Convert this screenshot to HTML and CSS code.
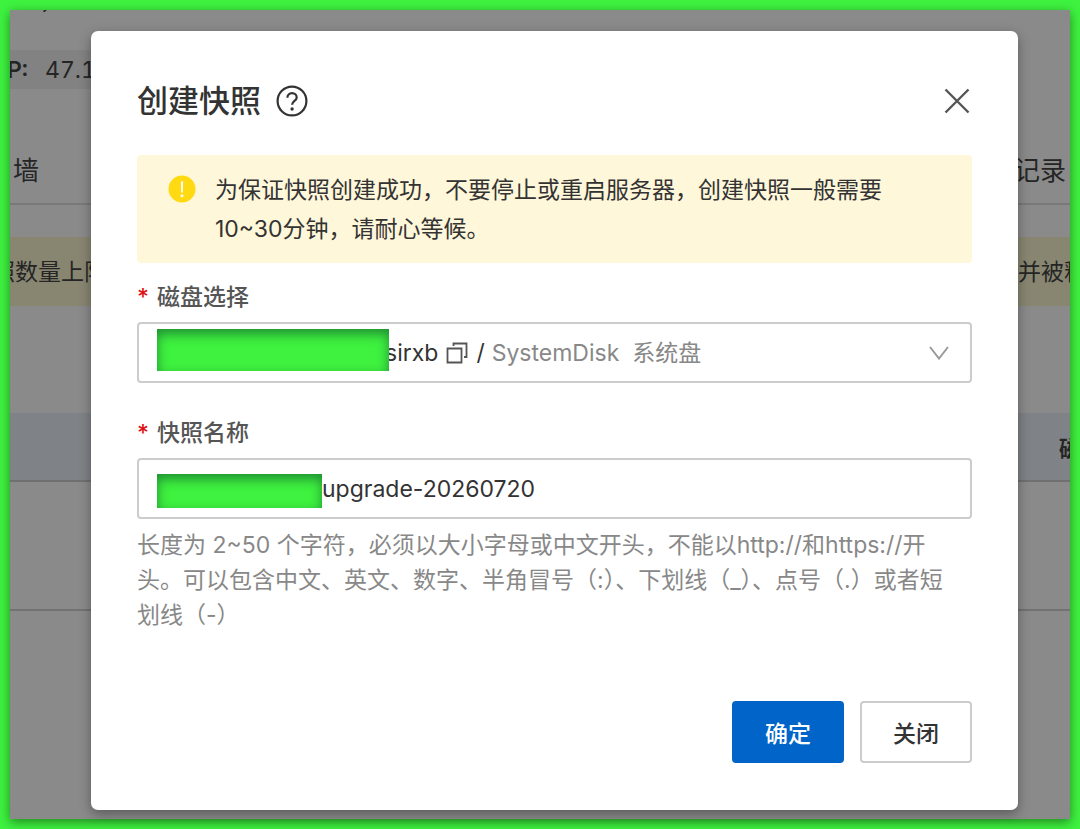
FILE: index.html
```html
<!DOCTYPE html>
<html lang="zh-CN">
<head>
<meta charset="utf-8">
<meta name="viewport" content="width=device-width, initial-scale=1">
<title>创建快照</title>
<link rel="stylesheet" href="styles.css">
</head>
<body>
<div class="frame">
  <div class="page" aria-hidden="true">
    <div class="page-top">，</div>
    <div class="page-info"><strong>P:</strong><span>47.1</span></div>
    <div class="page-tabs"><span>墙</span><span>记录</span></div>
    <div class="page-notice"><span>照数量上限</span><span>并被释</span></div>
    <div class="page-thead"><span>磁</span></div>
    <div class="page-row"></div>
  </div>

  <div class="overlay">
    <form class="dialog" role="dialog" aria-labelledby="dialog-title">
      <header class="dialog-header">
        <h1 class="dialog-title" id="dialog-title">创建快照</h1>
        <button class="icon-button" type="button" aria-label="帮助">
          <svg width="32" height="32" viewBox="0 0 32 32" fill="none" stroke="#333" stroke-width="2.2">
            <circle cx="16" cy="16" r="14.4"/>
            <path d="M11.4 12.8c0-2.7 1.9-4.6 4.6-4.6s4.7 1.8 4.7 4.3c0 3.3-4.6 3.5-4.6 7.2"/>
            <circle cx="16.1" cy="24" r="1.7" fill="#333" stroke="none"/>
          </svg>
        </button>
        <button class="icon-button icon-button-close" type="button" aria-label="关闭对话框">
          <svg width="30" height="30" viewBox="0 0 30 30" fill="none" stroke="#555" stroke-width="2.4">
            <path d="M3.5 3.5l23 23M26.5 3.5l-23 23"/>
          </svg>
        </button>
      </header>

      <div class="alert" role="alert">
        <svg class="alert-icon" width="28" height="28" viewBox="0 0 28 28">
          <circle cx="14" cy="14" r="13.5" fill="#ffd911"/>
          <path d="M12.9 6.5h2.2l-.3 11h-1.6z" fill="#fff"/>
          <circle cx="14" cy="20.8" r="1.5" fill="#fff"/>
        </svg>
        <p class="alert-text">为保证快照创建成功，不要停止或重启服务器，创建快照一般需要10~30分钟，请耐心等候。</p>
      </div>

      <div class="field">
        <label class="label" for="disk"><span class="required">*</span>磁盘选择</label>
        <div class="control">
          <span class="mask mask-disk"></span>
          <span class="disk-id">sirxb</span>
          <button class="icon-button copy" type="button" aria-label="复制">
            <svg width="22" height="22" viewBox="0 0 22 22" fill="none" stroke="#555" stroke-width="1.8">
              <path d="M1.5 6.5h14v14h-14z"/>
              <path d="M7.5 4V1.5h13V15H18"/>
            </svg>
          </button>
          <span class="slash">/</span>
          <select class="select" id="disk">
            <option>SystemDisk&nbsp; 系统盘</option>
          </select>
          <svg class="chevron" width="20" height="14" viewBox="0 0 20 14" fill="none" stroke="#999" stroke-width="2">
            <path d="M1 1l9 11.5L19 1"/>
          </svg>
        </div>
      </div>

      <div class="field">
        <label class="label" for="name"><span class="required">*</span>快照名称</label>
        <div class="control">
          <span class="mask mask-name"></span>
          <input class="input" id="name" type="text" value="upgrade-20260720" aria-describedby="name-help">
        </div>
        <p class="help" id="name-help">长度为 2~50 个字符，必须以大小字母或中文开头，不能以http://和https://开头。可以包含中文、英文、数字、半角冒号（:）、下划线（_）、点号（.）或者短划线（-）</p>
      </div>

      <footer class="actions">
        <button class="button button-primary" type="submit">确定</button>
        <button class="button" type="button">关闭</button>
      </footer>
    </form>
  </div>
</div>
</body>
</html>
```
FILE: styles.css
```css
* {
  box-sizing: border-box;
}

body {
  margin: 0;
  min-height: 100vh;
  padding: 10px;
  display: flex;
  background: #3ef23f;
  color: #333;
  font-family: Inter, "Noto Sans CJK SC", sans-serif;
  font-size: 23px;
}

h1,
p {
  margin: 0;
}

button,
input,
select {
  font: inherit;
  color: inherit;
}

.frame {
  position: relative;
  flex: 1;
  display: flex;
  background: #8a8a8a;
  box-shadow: 0 3px 10px rgba(0, 0, 0, 0.45);
}

/* Dimmed page behind the dialog */
.page {
  position: absolute;
  inset: 0;
  overflow: hidden;
  color: #252525;
  white-space: nowrap;
}

.page-top {
  height: 49px;
  margin-top: -9px;
  padding-left: 30px;
  line-height: 0;
}

.page-info {
  display: flex;
  align-items: center;
  gap: 17px;
  width: 50%;
  height: 39px;
  background: #828282;
  font-variant-numeric: tabular-nums;
}

.page-info strong {
  margin-left: -3px;
  font-weight: 600;
}

.page-tabs {
  display: flex;
  align-items: flex-end;
  justify-content: space-between;
  height: 116px;
  padding: 0 4px 16px 3px;
  border-bottom: 2px solid #797979;
  font-size: 26px;
}

.page-notice {
  display: flex;
  align-items: center;
  justify-content: space-between;
  height: 69px;
  margin: 32px -17px 0 -18px;
  padding-bottom: 4px;
  background: #888671;
}

.page-thead {
  display: flex;
  align-items: center;
  justify-content: flex-end;
  height: 69px;
  margin: 107px -12px 0 0;
  background: #7f8286;
  border-bottom: 2px solid #6f7072;
  font-weight: 700;
}

.page-row {
  height: 129px;
  border-bottom: 2px solid #727272;
}

/* Dialog */
.overlay {
  position: relative;
  flex: 1;
  display: flex;
  padding: 21px 52px 9px 81px;
}

.dialog {
  flex: 1;
  min-width: 0;
  display: flex;
  flex-direction: column;
  padding: 47px 46px;
  background: #fff;
  border-radius: 7px;
  box-shadow: 0 4px 12px rgba(0, 0, 0, 0.35);
}

.dialog-header {
  display: flex;
  align-items: center;
  gap: 15px;
  height: 46px;
  margin-bottom: 31px;
}

.dialog-title {
  font-size: 31px;
  font-weight: 500;
  line-height: 46px;
}

.icon-button {
  display: flex;
  padding: 0;
  border: 0;
  background: none;
  cursor: pointer;
}

.icon-button-close {
  margin-left: auto;
}

.alert {
  display: flex;
  gap: 19px;
  padding: 16px 31px 14px;
  margin-bottom: 17px;
  background: #fff7da;
  border-radius: 4px;
}

.alert-icon {
  flex: none;
  margin-top: 4px;
}

.alert-text {
  line-height: 39px;
}

.field {
  margin-bottom: 33px;
}

.label {
  display: flex;
  gap: 8px;
  margin-bottom: 7px;
  color: #555;
  font-weight: 500;
  line-height: 35px;
}

.required {
  width: 12px;
  color: #e01010;
}

.control {
  display: flex;
  align-items: center;
  height: 61px;
  padding: 0 18px;
  border: 2px solid #ccc;
  border-radius: 4px;
}

.mask {
  position: relative;
  flex: none;
  background: #3ef23f;
  box-shadow: inset 0 5px 12px rgba(0, 40, 40, 0.5);
}

.mask-disk {
  width: 232px;
  height: 42px;
  margin: 0 -4px 6px 0;
}

.mask-name {
  width: 165px;
  height: 34px;
  margin-top: 4px;
}

.copy {
  margin: 0 8px;
}

.slash {
  margin-right: 7px;
}

.select,
.input {
  flex: 1;
  min-width: 0;
  height: 100%;
  padding: 0;
  border: 0;
  outline: 0;
  background: none;
}

.select {
  appearance: none;
  color: #888;
}

.chevron {
  flex: none;
  margin-right: 3px;
}

.help {
  margin-top: 9px;
  padding-right: 12px;
  color: #888;
  line-height: 35px;
}

.actions {
  display: flex;
  justify-content: flex-end;
  gap: 16px;
  margin-top: auto;
}

.button {
  width: 112px;
  height: 62px;
  border: 2px solid #ccc;
  border-radius: 4px;
  background: #fff;
  font-weight: 500;
  cursor: pointer;
}

.button-primary {
  border-color: #0064c8;
  background: #0064c8;
  color: #fff;
}
```
